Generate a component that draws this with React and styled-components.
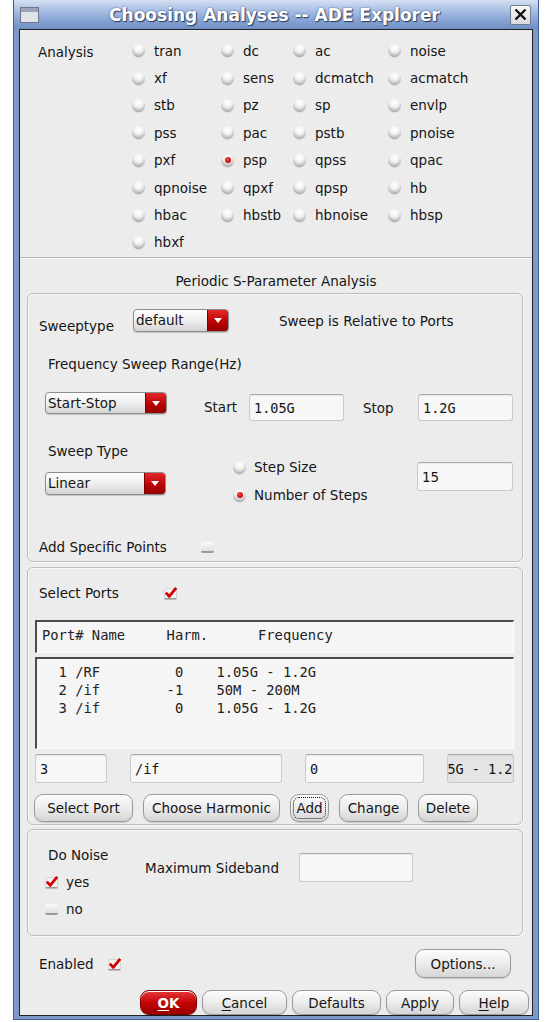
import React from 'react';
import styled, { createGlobalStyle } from 'styled-components';

const GlobalStyle = createGlobalStyle`
  html, body { margin: 0; padding: 0; background: #ffffff; }
  body {
    font-family: "DejaVu Sans", "Liberation Sans", sans-serif;
    font-size: 13.5px;
    color: #151515;
  }
  * { box-sizing: border-box; }
`;

const analyses = [
  'tran', 'dc', 'ac', 'noise',
  'xf', 'sens', 'dcmatch', 'acmatch',
  'stb', 'pz', 'sp', 'envlp',
  'pss', 'pac', 'pstb', 'pnoise',
  'pxf', 'psp', 'qpss', 'qpac',
  'qpnoise', 'qpxf', 'qpsp', 'hb',
  'hbac', 'hbstb', 'hbnoise', 'hbsp',
  'hbxf',
];

const Window = styled.div`
  margin-left: 13px;
  width: 526px;
  height: 1020px;
  display: flex;
  flex-direction: column;
  background: #7d99c9;
  border: 1px solid #3d5c92;
  border-top: none;
`;

const TitleBar = styled.div`
  height: 29px;
  flex: none;
  display: flex;
  align-items: center;
  padding: 0 7px 0 6px;
  background: linear-gradient(#d5e0f3, #abc0e4 35%, #86a3d3 70%, #6f8fc6);
`;

const TitleText = styled.div`
  flex: 1;
  text-align: center;
  font-weight: bold;
  font-size: 17px;
  color: #ffffff;
  text-shadow: 1px 1px 1px #2a3d60, 0 0 2px #3b5585;
`;

const CloseBox = styled.div`
  width: 21px;
  height: 20px;
  border: 1px solid #6f7c92;
  border-radius: 2px;
  background: linear-gradient(#fafafa, #d6d9de);
  display: flex;
  align-items: center;
  justify-content: center;
`;

const Frame = styled.div`
  flex: 1;
  display: flex;
  padding: 0 5px 3px 5px;
`;

const Content = styled.div`
  flex: 1;
  display: flex;
  flex-direction: column;
  border: 1px solid #222;
  background: #ececec;
`;

const AnalysisGrid = styled.div`
  display: grid;
  grid-template-columns: 94px 89px 72px 95px 1fr;
  grid-auto-rows: 27.4px;
  padding: 7px 0 0 18px;
`;

const GridLabel = styled.div`
  grid-column: 1;
  grid-row: 1 / span 8;
  padding-top: 7px;
  line-height: 16px;
`;

const RadioItem = styled.label`
  display: flex;
  align-items: center;
  gap: ${p => p.$gap || 9}px;
  line-height: 16px;
  white-space: nowrap;
`;

const Radio = styled.span`
  position: relative;
  flex: none;
  width: 13px;
  height: 13px;
  border-radius: 50%;
  background: radial-gradient(circle at 50% 28%, #ffffff 0%, #f2f2f2 38%, #c4c4c4 66%, #767676 100%);
  box-shadow: 0 1px 0 rgba(0, 0, 0, 0.08);
  &::after {
    content: '';
    display: ${p => (p.$on ? 'block' : 'none')};
    position: absolute;
    left: 3.5px;
    top: 3px;
    width: 6px;
    height: 6px;
    border-radius: 50%;
    background: radial-gradient(circle at 40% 35%, #ff4a4a, #c40000 75%);
  }
`;

const Separator = styled.div`
  margin-top: 1px;
  height: 2px;
  border-top: 1px solid #b9b9b9;
  border-bottom: 1px solid #fbfbfb;
`;

const SectionTitle = styled.div`
  margin-top: 14px;
  line-height: 16px;
  text-align: center;
`;

const Group = styled.div`
  margin: ${p => p.$mt}px 9px 0 7px;
  height: ${p => p.$h}px;
  border: 1px solid #bdbdbd;
  border-radius: 6px;
  box-shadow: inset 1px 1px 0 #f8f8f8, 1px 1px 0 #f8f8f8;
  display: flex;
  flex-direction: column;
  padding-bottom: ${p => p.$pb || 0}px;
`;

const Row = styled.div`
  display: flex;
  align-items: flex-start;
  margin-top: ${p => p.$mt || 0}px;
  padding-left: ${p => p.$pl || 0}px;
  ${p => p.$auto && 'margin-top: auto;'}
`;

const Label = styled.span`
  flex: none;
  display: inline-block;
  line-height: 16px;
  width: ${p => (p.$w ? `${p.$w}px` : 'auto')};
  margin-left: ${p => p.$ml || 0}px;
  margin-top: ${p => p.$mt || 0}px;
  white-space: nowrap;
`;

const SelectBox = styled.div`
  flex: none;
  width: ${p => p.$w}px;
  height: ${p => p.$h || 23}px;
  margin-top: ${p => p.$mt || 0}px;
  display: flex;
  border: 1px solid #8d8d8d;
  border-radius: 4px;
  overflow: hidden;
  background: linear-gradient(#fdfdfd, #ededed 55%, #d3d3d3);
  box-shadow: 0 1px 1px rgba(0, 0, 0, 0.18);
`;

const SelectValue = styled.span`
  flex: 1;
  padding-left: 2px;
  line-height: ${p => p.$lh}px;
`;

const SelectArrow = styled.span`
  width: 21px;
  display: flex;
  align-items: center;
  justify-content: center;
  border-left: 1px solid #7a0000;
  background: linear-gradient(#e22a2a, #bd0202 55%, #930000);
  &::after {
    content: '';
    border-left: 4px solid transparent;
    border-right: 4px solid transparent;
    border-top: 5px solid #ffffff;
  }
`;

const Field = styled.div`
  flex: none;
  width: ${p => p.$w}px;
  height: ${p => p.$h || 29}px;
  margin-top: ${p => p.$mt || 0}px;
  border: 1px solid #cacaca;
  border-top-color: #a9a9a9;
  border-radius: 3px;
  background: ${p => (p.$dim ? '#e4e4e4' : '#f7f7f7')};
  box-shadow: inset 0 1px 1px rgba(0, 0, 0, 0.06);
  display: flex;
  align-items: center;
  padding-left: 4px;
  overflow: hidden;
  white-space: pre;
  font-family: ${p => (p.$mono ? '"DejaVu Sans Mono", "Liberation Mono", monospace' : 'inherit')};
  font-size: ${p => (p.$mono ? '13.5px' : 'inherit')};
`;

const Shifted = styled.span`
  margin-left: -29px;
`;

const SweepLeft = styled.div`
  width: 205px;
  padding-left: 17px;
  display: flex;
  flex-direction: column;
  align-items: flex-start;
`;

const RadioStack = styled.div`
  width: 184px;
  padding-top: 16px;
  display: flex;
  flex-direction: column;
  gap: 12px;
`;

const Sunken = styled.div`
  margin: ${p => p.$mt}px 0 0 7px;
  width: 479px;
  height: ${p => p.$h}px;
  border-top: 2px solid #4b4b4b;
  border-left: 2px solid #4b4b4b;
  border-right: 1px solid #fdfdfd;
  border-bottom: 1px solid #fdfdfd;
  background: #f5f5f5;
  padding: ${p => p.$pt}px 0 0 5px;
  font-family: "DejaVu Sans Mono", "Liberation Mono", monospace;
  font-size: 13.8px;
  line-height: 18px;
  color: #222;
  white-space: pre;
`;

const FieldRow = styled.div`
  display: flex;
  gap: 23px;
  margin: 5px 0 0 7px;
`;

const ButtonRow = styled.div`
  display: flex;
  gap: ${p => p.$gap}px;
  margin: ${p => p.$mt}px 0 0 ${p => p.$ml || 0}px;
  justify-content: ${p => (p.$end ? 'flex-end' : 'flex-start')};
  padding-right: ${p => p.$pr || 0}px;
`;

const Btn = styled.button`
  flex: none;
  width: ${p => p.$w}px;
  height: ${p => p.$h || 28}px;
  padding: 0;
  border: 1px solid #9a9a9a;
  border-radius: 9px;
  background: linear-gradient(#fcfcfc, #ececec 50%, #d5d5d5);
  box-shadow: inset 0 1px 0 #ffffff, 0 1px 1px rgba(0, 0, 0, 0.15);
  font-family: "DejaVu Sans", "Liberation Sans", sans-serif;
  font-size: 13.5px;
  color: #151515;
  ${p => p.$focus && 'outline: 1px dotted #111; outline-offset: -4px;'}
  u { text-decoration: underline; text-underline-offset: 2px; }
`;

const OkBtn = styled(Btn)`
  border-color: #7c0000;
  background: linear-gradient(#e83a3a, #c20404 50%, #9a0000);
  color: #ffffff;
  font-weight: bold;
`;

const CheckRow = styled.div`
  display: flex;
  align-items: center;
  gap: ${p => p.$gap || 7}px;
  margin-top: ${p => p.$mt || 0}px;
  line-height: 16px;
`;

const EmptyBox = styled.span`
  flex: none;
  width: 13px;
  height: 11px;
  border-radius: 2px;
  background: linear-gradient(#fbfbfb, #dfdfdf);
  border-bottom: 2px solid #9b9b9b;
`;

const NoiseCol = styled.div`
  width: 100px;
  padding-top: 17px;
  display: flex;
  flex-direction: column;
`;

const EnabledRow = styled.div`
  display: flex;
  align-items: center;
  margin-top: 13px;
  padding: 0 21px 0 19px;
  height: 29px;
`;

const Spacer = styled.div`
  flex: 1;
`;

const Check = () => (
  <svg width="14" height="14" viewBox="0 0 14 14" style={{ flex: 'none' }}>
    <rect x="0.5" y="2.5" width="12" height="10" rx="1.5" fill="#f1f1f1" stroke="#d6d6d6" />
    <path d="M0.5 12.8 H12.5" stroke="#8d8d8d" strokeWidth="1.4" />
    <path d="M1.8 6.6 L5.2 10.4 L12.2 1.8" fill="none" stroke="#d40000" strokeWidth="2.8" strokeLinejoin="round" />
  </svg>
);

const WinIcon = () => (
  <svg width="19" height="16" viewBox="0 0 19 16">
    <rect x="0.5" y="0.5" width="18" height="15" fill="#dfe2e8" stroke="#6f7787" />
    <rect x="1" y="1" width="17" height="4" fill="#9aa4b8" />
  </svg>
);

const CloseIcon = () => (
  <svg width="13" height="13" viewBox="0 0 13 13">
    <path d="M1.5 1.5 L11.5 11.5 M11.5 1.5 L1.5 11.5" stroke="#111" strokeWidth="2.4" />
  </svg>
);

const Select = ({ w, h = 23, mt, value }) => (
  <SelectBox $w={w} $h={h} $mt={mt}>
    <SelectValue $lh={h - 2}>{value}</SelectValue>
    <SelectArrow />
  </SelectBox>
);

const header = 'Port# Name     Harm.      Frequency';
const ports = [
  '  1 /RF         0    1.05G - 1.2G',
  '  2 /if        -1    50M - 200M',
  '  3 /if         0    1.05G - 1.2G',
];

export default function App() {
  return (
    <>
      <GlobalStyle />
      <Window>
        <TitleBar>
          <WinIcon />
          <TitleText>Choosing Analyses -- ADE Explorer</TitleText>
          <CloseBox><CloseIcon /></CloseBox>
        </TitleBar>
        <Frame>
          <Content>
            <AnalysisGrid>
              <GridLabel>Analysis</GridLabel>
              {analyses.map(a => (
                <RadioItem key={a}>
                  <Radio $on={a === 'psp'} />
                  {a}
                </RadioItem>
              ))}
            </AnalysisGrid>
            <Separator />
            <SectionTitle>Periodic S-Parameter Analysis</SectionTitle>

            <Group $mt={4} $h={269} $pb={6}>
              <Row $mt={15} $pl={11}>
                <Label $w={94} $mt={9}>Sweeptype</Label>
                <Select w={96} value="default" />
                <Label $ml={50} $mt={4}>Sweep is Relative to Ports</Label>
              </Row>
              <Row $mt={22} $pl={20}>
                <Label>Frequency Sweep Range(Hz)</Label>
              </Row>
              <Row $mt={20} $pl={17}>
                <Select w={122} h={22} value="Start-Stop" />
                <Label $w={45} $ml={37} $mt={7}>Start</Label>
                <Field $w={95} $h={27} $mt={2} $mono>1.05G</Field>
                <Label $w={55} $ml={19} $mt={8}>Stop</Label>
                <Field $w={95} $h={27} $mt={2} $mono>1.2G</Field>
              </Row>
              <Row $mt={22}>
                <SweepLeft>
                  <Label $ml={3}>Sweep Type</Label>
                  <Select w={121} mt={13} value="Linear" />
                </SweepLeft>
                <RadioStack>
                  <RadioItem $gap={8}><Radio />Step Size</RadioItem>
                  <RadioItem $gap={8}><Radio $on />Number of Steps</RadioItem>
                </RadioStack>
                <Field $w={96} $mt={19}>15</Field>
              </Row>
              <Row $auto $pl={11}>
                <CheckRow $gap={0}>
                  <Label $w={155}>Add Specific Points</Label>
                  <EmptyBox />
                </CheckRow>
              </Row>
            </Group>

            <Group $mt={5} $h={258}>
              <Row $mt={17} $pl={11}>
                <CheckRow $gap={0}>
                  <Label $w={118}>Select Ports</Label>
                  <Check />
                </CheckRow>
              </Row>
              <Sunken $mt={19} $h={33} $pt={4}>{header}</Sunken>
              <Sunken $mt={4} $h={92} $pt={4}>{ports.join('\n')}</Sunken>
              <FieldRow>
                <Field $w={72} $mono>3</Field>
                <Field $w={152} $mono>/if</Field>
                <Field $w={119} $mono>0</Field>
                <Field $w={67} $mono $dim><Shifted>1.05G - 1.2G</Shifted></Field>
              </FieldRow>
              <ButtonRow $mt={11} $ml={6} $gap={10}>
                <Btn $w={99}>Select Port</Btn>
                <Btn $w={137}>Choose Harmonic</Btn>
                <Btn $w={39} $focus>Add</Btn>
                <Btn $w={69}>Change</Btn>
                <Btn $w={60}>Delete</Btn>
              </ButtonRow>
            </Group>

            <Group $mt={4} $h={107}>
              <Row $pl={17}>
                <NoiseCol>
                  <Label $ml={3}>Do Noise</Label>
                  <CheckRow $mt={11}>
                    <Check />
                    yes
                  </CheckRow>
                  <CheckRow $mt={11} $gap={8}>
                    <EmptyBox />
                    no
                  </CheckRow>
                </NoiseCol>
                <Label $w={154} $mt={30}>Maximum Sideband</Label>
                <Field $w={114} $mt={23} />
              </Row>
            </Group>

            <EnabledRow>
              <Label $w={69}>Enabled</Label>
              <Check />
              <Spacer />
              <Btn $w={96} $h={29}>Options...</Btn>
            </EnabledRow>

            <ButtonRow $mt={12} $gap={5} $end $pr={3}>
              <OkBtn $w={57} $h={25}><u>O</u>K</OkBtn>
              <Btn $w={85} $h={25}><u>C</u>ancel</Btn>
              <Btn $w={89} $h={25}>Defaults</Btn>
              <Btn $w={68} $h={25}>Apply</Btn>
              <Btn $w={70} $h={25}><u>H</u>elp</Btn>
            </ButtonRow>
          </Content>
        </Frame>
      </Window>
    </>
  );
}
